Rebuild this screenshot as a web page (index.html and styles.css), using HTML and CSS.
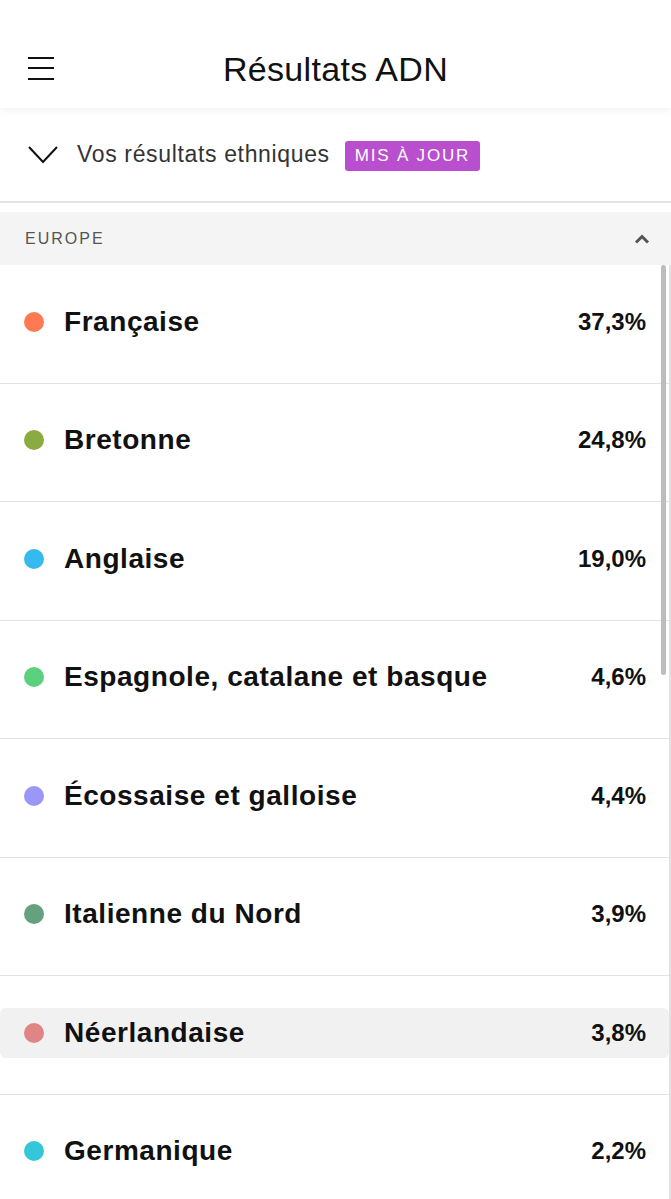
FILE: index.html
```html
<!DOCTYPE html>
<html>
  <head>
    <meta charset="utf-8">
    <title>Résultats ADN</title>
    <link rel="stylesheet" href="styles.css">
  </head>
  <body>
    <header class="topbar">
      <svg class="menu" width="26" height="26" viewBox="0 0 26 26">
        <path d="M0 3h26M0 13h26M0 24h26" stroke="#111" stroke-width="2" fill="none"/>
      </svg>
      <h1>Résultats ADN</h1>
      <span></span>
    </header>

    <div class="summary">
      <svg class="chev" width="30" height="18" viewBox="0 0 30 18">
        <polyline points="1,1 15,16 29,1" stroke="#111" stroke-width="2" fill="none"/>
      </svg>
      <span class="summary-text">Vos résultats ethniques</span>
      <span class="badge">MIS À JOUR</span>
    </div>

    <div class="region">
      <span>EUROPE</span>
      <svg width="16" height="10" viewBox="0 0 16 10">
        <polyline points="2,8.5 8,2.5 14,8.5" stroke="#555" stroke-width="3" fill="none"/>
      </svg>
    </div>

    <ul class="list">
      <li><div class="item"><i class="dot" style="background:#ff7a52"></i><b>Française</b><span class="pct">37,3%</span></div></li>
      <li><div class="item"><i class="dot" style="background:#8aab3f"></i><b>Bretonne</b><span class="pct">24,8%</span></div></li>
      <li><div class="item"><i class="dot" style="background:#36b9ef"></i><b>Anglaise</b><span class="pct">19,0%</span></div></li>
      <li><div class="item"><i class="dot" style="background:#5bd07d"></i><b>Espagnole, catalane et basque</b><span class="pct">4,6%</span></div></li>
      <li><div class="item"><i class="dot" style="background:#9b97f7"></i><b>Écossaise et galloise</b><span class="pct">4,4%</span></div></li>
      <li><div class="item"><i class="dot" style="background:#65a07f"></i><b>Italienne du Nord</b><span class="pct">3,9%</span></div></li>
      <li><div class="item active"><i class="dot" style="background:#e08585"></i><b>Néerlandaise</b><span class="pct">3,8%</span></div></li>
      <li><div class="item"><i class="dot" style="background:#36c6d9"></i><b>Germanique</b><span class="pct">2,2%</span></div></li>
      <div class="thumb"></div>
    </ul>
  </body>
</html>
```

FILE: styles.css
```css
body {
  margin: 0;
  font-family: "Liberation Sans", Arial, sans-serif;
  color: #111;
  background: #fff;
  overflow: hidden;
}

.topbar {
  height: 108px;
  display: grid;
  grid-template-columns: 1fr auto 1fr;
  align-items: center;
  padding: 32px 28px 0;
  box-sizing: border-box;
  box-shadow: 0 3px 8px rgba(0,0,0,0.05);
  position: relative;
}
.topbar h1 {
  margin: 0;
  font-size: 34px;
  font-weight: normal;
  letter-spacing: 0.3px;
  padding-bottom: 2px;
}
.menu { margin-top: -4px; }

.summary {
  height: 93px;
  display: flex;
  align-items: center;
  padding-left: 28px;
  border-bottom: 2px solid #e4e4e4;
}
.chev { margin-top: 1px; }
.summary-text {
  margin-left: 19px;
  font-size: 23px;
  letter-spacing: 0.65px;
  color: #333;
}
.badge {
  margin-left: 15px;
  margin-top: 3px;
  height: 30px;
  padding: 0 10px;
  display: flex;
  align-items: center;
  background: #b94fcf;
  color: #fff;
  border-radius: 3px;
  font-size: 17px;
  letter-spacing: 1.8px;
}

.region {
  margin-top: 9px;
  height: 53px;
  background: #f4f4f4;
  display: flex;
  align-items: center;
  justify-content: space-between;
  padding: 0 21px 0 25px;
}
.region span {
  font-size: 16px;
  letter-spacing: 2px;
  color: #555;
}

.list {
  list-style: none;
  margin: 0;
  padding: 0;
  position: relative;
  border-right: 2px solid #e2e2e2;
}
.list li {
  height: 118.5px;
  box-sizing: border-box;
  border-bottom: 1.5px solid #e2e2e2;
  display: flex;
  align-items: center;
}
.item {
  flex: 1;
  height: 50px;
  display: flex;
  align-items: center;
  padding: 0 23px 0 24px;
  border-radius: 6px;
  margin-top: -4px;
}
.item.active { background: #f1f1f1; }
.dot {
  width: 20px;
  height: 20px;
  border-radius: 50%;
  flex: none;
  margin-right: 20px;
}
.item b {
  font-size: 28px;
  letter-spacing: 0.55px;
  flex: 1;
}
.pct {
  font-size: 24px;
  font-weight: bold;
}

.thumb {
  position: absolute;
  top: 0;
  right: 3px;
  width: 5px;
  height: 410px;
  border-radius: 3px;
  background: #bdbdbd;
}
```
